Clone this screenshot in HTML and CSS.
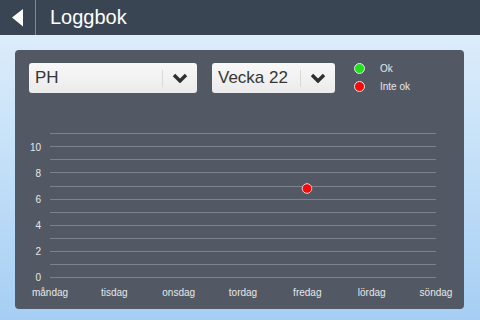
FILE: index.html
```html
<!DOCTYPE html>
<html lang="sv">

<head>
    <meta charset="UTF-8">
    <meta name="viewport" content="width=device-width, initial-scale=1.0">
    <title>Loggbok</title>
    <link rel="stylesheet" href="styles.css">
</head>

<body>
    <header class="topbar">
        <button class="back">
            <svg width="35" height="35" viewBox="0 0 35 35"><polygon points="12,17.5 23,9 23,26.5" fill="#ffffff"/></svg>
        </button>
        <h1 class="title">Loggbok</h1>
    </header>
    <main class="page">
        <section class="panel">
            <div class="toolbar">
                <div class="select select-wide">
                    <span class="select-value">PH</span>
                    <span class="select-arrow">
                        <svg width="16" height="10" viewBox="0 0 16 10"><polyline points="2,2 8,8 14,2" fill="none" stroke="#2f2f2f" stroke-width="3.4"/></svg>
                    </span>
                </div>
                <div class="select select-week">
                    <span class="select-value">Vecka 22</span>
                    <span class="select-arrow">
                        <svg width="16" height="10" viewBox="0 0 16 10"><polyline points="2,2 8,8 14,2" fill="none" stroke="#2f2f2f" stroke-width="3.4"/></svg>
                    </span>
                </div>
                <ul class="legend">
                    <li><span class="dot dot-ok"></span>Ok</li>
                    <li><span class="dot dot-bad"></span>Inte ok</li>
                </ul>
            </div>
            <svg class="chart" width="449" height="184" viewBox="0 0 449 184">
                <!-- rutnät, ett streck per heltal 0-11 -->
                <g class="grid">
                    <line x1="35" x2="421" y1="152.5" y2="152.5"/>
                    <line x1="35" x2="421" y1="139.5" y2="139.5"/>
                    <line x1="35" x2="421" y1="126.5" y2="126.5"/>
                    <line x1="35" x2="421" y1="113.5" y2="113.5"/>
                    <line x1="35" x2="421" y1="100.5" y2="100.5"/>
                    <line x1="35" x2="421" y1="87.5" y2="87.5"/>
                    <line x1="35" x2="421" y1="74.5" y2="74.5"/>
                    <line x1="35" x2="421" y1="61.5" y2="61.5"/>
                    <line x1="35" x2="421" y1="47.5" y2="47.5"/>
                    <line x1="35" x2="421" y1="34.5" y2="34.5"/>
                    <line x1="35" x2="421" y1="21.5" y2="21.5"/>
                    <line x1="35" x2="421" y1="8.5" y2="8.5"/>
                </g>
                <g class="y-labels">
                    <text x="26" y="156">0</text>
                    <text x="26" y="130">2</text>
                    <text x="26" y="104">4</text>
                    <text x="26" y="78">6</text>
                    <text x="26" y="51.5">8</text>
                    <text x="26" y="25.5">10</text>
                </g>
                <g class="x-labels">
                    <text x="35" y="170.5">måndag</text>
                    <text x="99.3" y="170.5">tisdag</text>
                    <text x="163.7" y="170.5">onsdag</text>
                    <text x="228" y="170.5">tordag</text>
                    <text x="292.3" y="170.5">fredag</text>
                    <text x="356.7" y="170.5">lördag</text>
                    <text x="421" y="170.5">söndag</text>
                </g>
                <circle class="point point-bad" cx="292" cy="63.5" r="4.8"/>
            </svg>
        </section>
    </main>
</body>

</html>
```

FILE: styles.css
```css
* {
    padding: 0;
    margin: 0;
    box-sizing: border-box;
    font-family: "Liberation Sans", Arial, sans-serif;
}

body {
    width: 480px;
    height: 320px;
    overflow: hidden;
    background: linear-gradient(to bottom, #e3f0fc 0%, #c4e0f8 50%, #a6cef4 100%);
}

.topbar {
    height: 35px;
    display: flex;
    align-items: center;
    background-color: #3a4553;
}

.back {
    width: 36px;
    height: 35px;
    border: none;
    border-right: 1px solid #7f8994;
    background: transparent;
    display: block;
}

.back svg {
    display: block;
}

.title {
    margin-left: 14px;
    font-size: 20px;
    font-weight: normal;
    color: #ffffff;
}

.page {
    height: 285px;
    padding: 15px 16px 11px 15px;
}

.panel {
    height: 259px;
    padding-top: 13px;
    background-color: #525965;
    border-radius: 4px;
}

.toolbar {
    height: 30px;
    margin: 0 14px;
    display: flex;
    align-items: flex-start;
}

.select {
    height: 30px;
    display: flex;
    align-items: center;
    border-radius: 3px;
    background: linear-gradient(to bottom, #f8f8f8, #ebebeb);
}

.select-wide {
    width: 168px;
}

.select-week {
    width: 123px;
    margin-left: 15px;
}

.select-value {
    flex: 1;
    padding-left: 6px;
    font-size: 17px;
    color: #363636;
}

.select-arrow {
    width: 35px;
    height: 17px;
    display: flex;
    align-items: center;
    justify-content: center;
    border-left: 1px solid #d9d9d9;
}

.select-arrow svg {
    display: block;
}

.legend {
    list-style: none;
    margin-left: 19px;
}

.legend li {
    height: 17.5px;
    display: flex;
    align-items: flex-start;
    font-size: 10px;
    color: #e8e8e8;
}

.dot {
    width: 11px;
    height: 11px;
    margin-right: 15px;
    border-radius: 50%;
    border: 1px solid #e6e6e6;
}

.dot-ok {
    background-color: #1ee21e;
}

.dot-bad {
    background-color: #f50a0a;
}

.chart {
    display: block;
    margin-top: 32px;
}

.grid line {
    stroke: #7d838d;
    stroke-width: 1;
}

.chart text {
    font-size: 10px;
    fill: #e8e8e8;
}

.y-labels text {
    text-anchor: end;
}

.x-labels text {
    text-anchor: middle;
}

.point-bad {
    fill: #f50a0a;
    stroke: #f3d0d0;
    stroke-width: 1;
}
```
